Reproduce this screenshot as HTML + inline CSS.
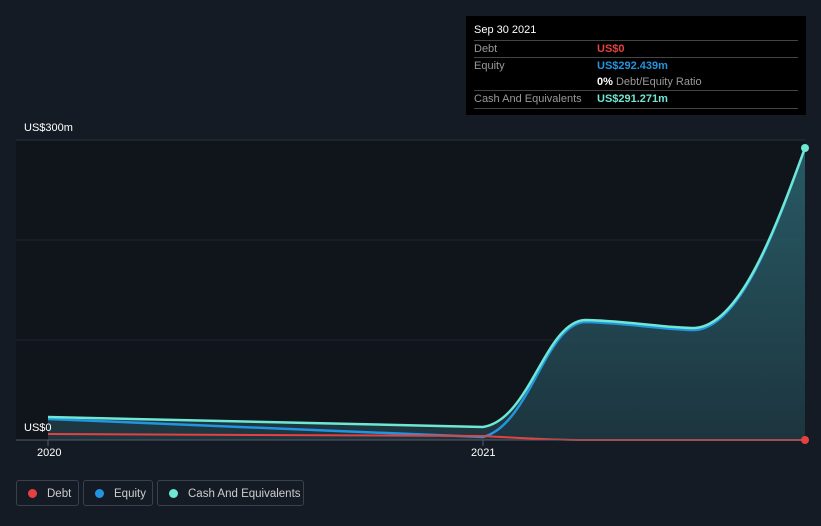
<!DOCTYPE html><html><head><style>
body{margin:0;width:821px;height:526px;background:#151b24;font-family:"Liberation Sans",sans-serif;position:relative;overflow:hidden}
.t{position:absolute;font-size:11px;color:#fff}
.tip{position:absolute;left:466px;top:16px;width:340px;height:99px;background:#000}
.row{position:absolute;left:8px;width:324px;border-top:1px solid #444;font-size:11px;color:#999}
.leg{position:absolute;top:480px;height:26px;border:1px solid #3a414c;border-radius:3px;font-size:11.5px;color:#ccc;line-height:26px;box-sizing:border-box}
.leg i{display:inline-block;width:9px;height:9px;border-radius:50%;margin:0 10px 0 11px;vertical-align:-1px}
</style></head><body>
<svg width="821" height="526" style="position:absolute;left:0;top:0">
<rect x="16" y="140" width="789" height="300" fill="#10141b"/>
<line x1="16" y1="140" x2="805" y2="140" stroke="#2c323b"/>
<line x1="16" y1="240" x2="805" y2="240" stroke="#20262f"/>
<line x1="16" y1="340" x2="805" y2="340" stroke="#20262f"/>
<defs><linearGradient id="g" x1="0" y1="0" x2="0" y2="1"><stop offset="0" stop-color="#2d6a76" stop-opacity=".8"/><stop offset="1" stop-color="#1e3842" stop-opacity=".9"/></linearGradient></defs>
<path d="M48 417 L483 427 C530 420 545 322 585 320 C630 321 665 328 695 328 C740 325 775 230 805 148 L805 440 L48 440Z" fill="url(#g)"/>
<path d="M48 419 L483 437 C530 425 545 324 585 322 C630 323 665 330 695 330 C740 327 775 232 805 148" fill="none" stroke="#2394df" stroke-width="2.5"/>
<path d="M48 434 L483 436 C520 438 550 440 585 440 L805 440" fill="none" stroke="#e64141" stroke-width="2"/>
<path d="M48 417 L483 427 C530 420 545 322 585 320 C630 321 665 328 695 328 C740 325 775 230 805 148" fill="none" stroke="#6ee7d3" stroke-width="2.5"/>
<line x1="16" y1="440" x2="805" y2="440" stroke="#555c66"/>
<line x1="48" y1="440" x2="48" y2="446" stroke="#555c66"/>
<line x1="483" y1="440" x2="483" y2="446" stroke="#555c66"/>
<circle cx="805" cy="148" r="4" fill="#6ee7d3"/>
<circle cx="805" cy="440" r="4" fill="#e64141"/>
</svg>
<div class="t" style="left:24px;top:122px">US$300m</div>
<div class="t" style="left:24px;top:422px">US$0</div>
<div class="t" style="left:37px;top:447px">2020</div>
<div class="t" style="left:471px;top:447px">2021</div>
<div class="tip">
<div class="t" style="left:8px;top:8px">Sep 30 2021</div>
<div class="row" style="top:24px;height:16px"><span style="position:absolute;top:2px">Debt</span><span style="position:absolute;left:123px;top:2px;color:#e64141;font-weight:bold">US$0</span></div>
<div class="row" style="top:41px;height:33px"><span style="position:absolute;top:2px">Equity</span><span style="position:absolute;left:123px;top:2px;color:#2394df;font-weight:bold">US$292.439m</span><span style="position:absolute;left:123px;top:18px"><b style="color:#fff">0%</b> Debt/Equity Ratio</span></div>
<div class="row" style="top:74px;height:17px;border-bottom:1px solid #444"><span style="position:absolute;top:2px">Cash And Equivalents</span><span style="position:absolute;left:123px;top:2px;color:#6ee7d3;font-weight:bold">US$291.271m</span></div>
</div>
<div class="leg" style="left:16px;width:63px"><i style="background:#e64141"></i>Debt</div>
<div class="leg" style="left:83px;width:70px"><i style="background:#2394df"></i>Equity</div>
<div class="leg" style="left:157px;width:147px"><i style="background:#6ee7d3"></i>Cash And Equivalents</div>
</body></html>
